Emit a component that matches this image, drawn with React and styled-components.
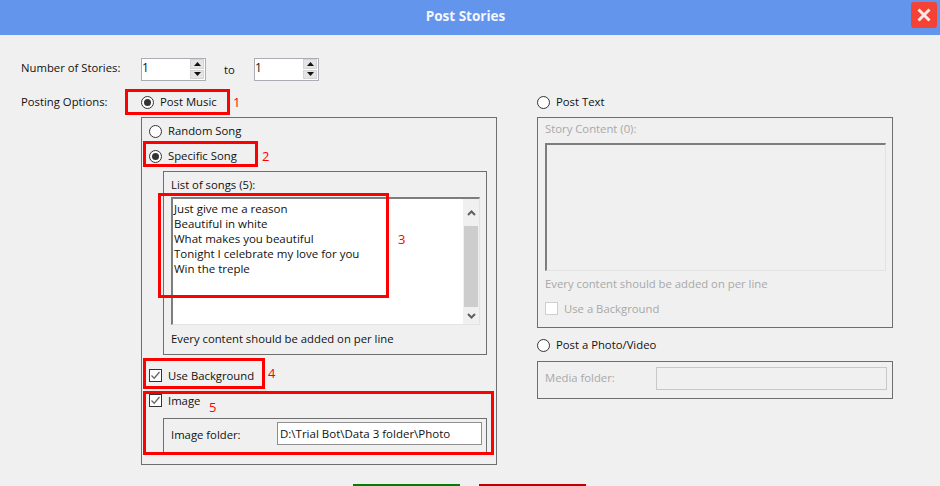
import React from "react";
import styled, { createGlobalStyle } from "styled-components";

const Global = createGlobalStyle`
  html, body { margin: 0; padding: 0; background: #f0f0f0; }
  * { box-sizing: border-box; }
`;

const Page = styled.div`
  position: relative;
  width: 940px;
  height: 486px;
  overflow: hidden;
  background: #f0f0f0;
  color: #111;
  font-family: "Open Sans", "Noto Sans", sans-serif;
  font-size: 11.3px;
  line-height: 15px;
`;
const TitleBar = styled.header`
  height: 35px;
  background: #6495ed;
  display: flex;
  align-items: center;
  padding-right: 3px;
`;
const Title = styled.h1`
  flex: 1;
  margin: 0 0 3px;
  padding-left: 20px;
  text-align: center;
  font-size: 13.5px;
  font-weight: 700;
  color: #f4f7fd;
`;
const Close = styled.button`
  width: 26px;
  height: 26px;
  margin-top: -6px;
  padding: 0;
  border: 0;
  border-radius: 3px;
  background: #f44336;
  display: flex;
  align-items: center;
  justify-content: center;
`;
const Form = styled.main`
  padding: 23px 0 0 21px;
`;
const NumberRow = styled.div`
  display: flex;
  align-items: flex-start;
  height: 23px;
`;
const FieldLabel = styled.div`
  width: 120px;
  flex: none;
  line-height: ${(p) => p.$lh}px;
`;
const To = styled.span`
  width: 48px;
  padding-left: 18px;
  padding-top: 4px;
`;
const Spinner = styled.div`
  width: 65px;
  height: 23px;
  background: #fff;
  border: 1px solid #acacb4;
  display: flex;
  padding-right: 1px;
  justify-content: space-between;
`;
const SpinValue = styled.span`
  font-size: 12px;
  line-height: 17px;
`;
const SpinButtons = styled.div`
  width: 14px;
  height: 20px;
  display: flex;
  flex-direction: column;
  gap: 1px;
`;
const SpinButton = styled.div`
  flex: 1;
  background: #e4e4e4;
  border: 1px solid #d4d4d4;
  display: flex;
  align-items: center;
  justify-content: center;
`;
const Columns = styled.div`
  display: flex;
  margin-top: 9px;
`;
const Side = styled.section`
  width: 356px;
  flex: none;
  margin-left: ${(p) => p.$gap}px;
`;
const OptionRow = styled.label`
  display: flex;
  align-items: center;
  gap: 6px;
  height: ${(p) => p.$h || 24}px;
  margin-top: ${(p) => p.$mt || 0}px;
  color: ${(p) => (p.$off ? "#a8a8a8" : "inherit")};
`;
const OptionText = styled.span`
  margin-bottom: ${(p) => (p.$level ? 0 : 2)}px;
`;
const Radio = styled.span`
  width: 13px;
  height: 13px;
  flex: none;
  border-radius: 50%;
  border: 1px solid #333;
  background: #fff;
  display: flex;
  align-items: center;
  justify-content: center;
  &::after {
    content: "";
    display: ${(p) => (p.$on ? "block" : "none")};
    width: 7px;
    height: 7px;
    border-radius: 50%;
    background: #333;
  }
`;
const Check = styled.span`
  width: 13px;
  height: 13px;
  flex: none;
  border: 1px solid ${(p) => (p.$off ? "#cfcfcf" : "#333")};
  background: #fff;
  display: flex;
  align-items: center;
  justify-content: center;
`;
const Group = styled.div`
  border: 1px solid #6e6e6e;
  margin-top: ${(p) => p.$mt || 3}px;
  height: ${(p) => p.$h}px;
  padding: ${(p) => p.$pad};
`;
const Inner = styled.div`
  border: 1px solid #6e6e6e;
  width: 324px;
  margin-left: 14px;
`;
const SongBox = styled(Inner)`
  height: 184px;
  margin-top: 3px;
  padding: 5px 5px 0 7px;
`;
const FolderBox = styled(Inner)`
  height: 36px;
  margin-top: 10px;
  padding: 3px 4px 0 7px;
  display: flex;
  align-items: flex-start;
`;
const Caption = styled.div`
  height: ${(p) => p.$h || 15}px;
  color: ${(p) => (p.$off ? "#a8a8a8" : "inherit")};
  line-height: ${(p) => p.$h || 15}px;
`;
const ListArea = styled.div`
  height: 128px;
  width: 309px;
  margin: 5px 0 6px;
  border-top: 2px solid #7d7d7d;
  border-left: 2px solid #7d7d7d;
  border-right: 1px solid #e3e3e3;
  border-bottom: 1px solid #e3e3e3;
  background: ${(p) => (p.$off ? "#f0f0f0" : "#fff")};
  display: flex;
  justify-content: space-between;
`;
const Lines = styled.div`
  padding: 2px 0 0 1px;
  font-size: 11.5px;
`;
const Scroll = styled.div`
  width: 16px;
  background: #f0f0f0;
  padding: 0 1px;
  display: flex;
  flex-direction: column;
  align-items: center;
`;
const ScrollEnd = styled.div`
  height: 27px;
  display: flex;
  align-items: center;
  justify-content: center;
  &:last-child { height: 17px; }
`;
const Thumb = styled.div`
  width: 100%;
  flex: 1;
  background: #cdcdcd;
`;
const FolderLabel = styled.div`
  width: 106px;
  flex: none;
  padding-top: 5px;
`;
const TextField = styled.div`
  flex: 1;
  height: 23px;
  border: 1px solid ${(p) => (p.$off ? "#c8c8c8" : "#8f8f8f")};
  background: ${(p) => (p.$off ? "#f0f0f0" : "#fff")};
  padding: 3px 2px 2px;
  font-size: 11.5px;
`;
const StoryArea = styled(ListArea)`
  width: 341px;
  margin: 7px 0 5px;
`;
const StoryBody = styled.div`
  padding: 3px 0 0 7px;
`;
const MediaRow = styled.div`
  display: flex;
  padding: 5px 5px 0 7px;
`;
const MediaLabel = styled(FolderLabel)`
  width: 111px;
  padding-top: 3px;
  color: #a8a8a8;
`;
const ActionRow = styled.div`
  display: flex;
  gap: 19px;
  margin: 19px 0 0 332px;
`;
const Action = styled.button`
  width: 107px;
  height: 30px;
  border: 0;
  padding: 0;
  background: ${(p) => p.$bg};
`;
const Mark = styled.div`
  position: absolute;
  left: ${(p) => p.$x}px;
  top: ${(p) => p.$y}px;
  width: ${(p) => p.$w}px;
  height: ${(p) => p.$h}px;
  border: 3px solid #f00;
  pointer-events: none;
`;
const Num = styled.span`
  position: absolute;
  left: ${(p) => p.$x}px;
  top: ${(p) => p.$y}px;
  color: #f00;
  font-size: 13px;
  line-height: 16px;
`;

const Tick = () => (
  <svg width="11" height="11" viewBox="0 0 11 11" fill="none">
    <path d="M1.5 5.5L4.2 8.2L9.5 2" stroke="#666" strokeWidth="1.3" />
  </svg>
);
const Tri = ({ up }) => (
  <svg width="7" height="4" viewBox="0 0 7 4">
    <path d={up ? "M3.5 0L7 4H0Z" : "M0 0H7L3.5 4Z"} fill="#111" />
  </svg>
);
const Chev = ({ up }) => (
  <svg width="9" height="6" viewBox="0 0 9 6" fill="none">
    <path d={up ? "M1 5L4.5 1.5L8 5" : "M1 1L4.5 4.5L8 1"} stroke="#606060" strokeWidth="2" />
  </svg>
);
const Spin = ({ value }) => (
  <Spinner>
    <SpinValue>{value}</SpinValue>
    <SpinButtons>
      <SpinButton><Tri up /></SpinButton>
      <SpinButton><Tri /></SpinButton>
    </SpinButtons>
  </Spinner>
);

const marks = [
  [125, 89, 105, 26],
  [143, 141, 115, 26],
  [158, 193, 231, 105],
  [143, 358, 122, 31],
  [143, 391, 351, 64],
];
const nums = [
  ["1", 233, 94],
  ["2", 262, 148],
  ["3", 398, 231],
  ["4", 268, 365],
  ["5", 209, 399],
];

export default function App() {
  return (
    <Page>
      <Global />
      <TitleBar>
        <Title>Post Stories</Title>
        <Close aria-label="Close">
          <svg width="16" height="16" viewBox="0 0 16 16" fill="none">
            <path d="M2.5 2.5L13.5 13.5M13.5 2.5L2.5 13.5" stroke="#fbe9e7" strokeWidth="3" />
          </svg>
        </Close>
      </TitleBar>
      <Form>
        <NumberRow>
          <FieldLabel $lh={20}>Number of Stories:</FieldLabel>
          <Spin value="1" />
          <To>to</To>
          <Spin value="1" />
        </NumberRow>
        <Columns>
          <FieldLabel $lh={24}>Posting Options:</FieldLabel>
          <Side $gap={0}>
            <OptionRow><Radio $on /><OptionText>Post Music</OptionText></OptionRow>
            <Group $h={348} $pad="1px 0 0 7px">
              <OptionRow><Radio /><OptionText>Random Song</OptionText></OptionRow>
              <OptionRow $mt={1}><Radio $on /><OptionText>Specific Song</OptionText></OptionRow>
              <SongBox>
                <Caption>List of songs (5):</Caption>
                <ListArea>
                  <Lines>
                    <div>Just give me a reason</div>
                    <div>Beautiful in white</div>
                    <div>What makes you beautiful</div>
                    <div>Tonight I celebrate my love for you</div>
                    <div>Win the treple</div>
                  </Lines>
                  <Scroll>
                    <ScrollEnd><Chev up /></ScrollEnd>
                    <Thumb />
                    <ScrollEnd><Chev /></ScrollEnd>
                  </Scroll>
                </ListArea>
                <Caption>Every content should be added on per line</Caption>
              </SongBox>
              <OptionRow $mt={8}><Check><Tick /></Check><OptionText $level>Use Background</OptionText></OptionRow>
              <OptionRow $h={15} $mt={6}><Check><Tick /></Check><OptionText $level>Image</OptionText></OptionRow>
              <FolderBox>
                <FolderLabel>Image folder:</FolderLabel>
                <TextField>D:\Trial Bot\Data 3 folder\Photo</TextField>
              </FolderBox>
            </Group>
          </Side>
          <Side $gap={40}>
            <OptionRow><Radio /><OptionText>Post Text</OptionText></OptionRow>
            <Group $h={211} $pad="0">
              <StoryBody>
                <Caption $off>Story Content (0):</Caption>
                <StoryArea $off />
                <Caption $off>Every content should be added on per line</Caption>
                <OptionRow $off $mt={5}><Check $off /><OptionText $level>Use a Background</OptionText></OptionRow>
              </StoryBody>
            </Group>
            <OptionRow $mt={5}><Radio /><OptionText>Post a Photo/Video</OptionText></OptionRow>
            <Group $h={38} $pad="0" $mt={4}>
              <MediaRow>
                <MediaLabel>Media folder:</MediaLabel>
                <TextField $off />
              </MediaRow>
            </Group>
          </Side>
        </Columns>
        <ActionRow>
          <Action $bg="#008000" aria-label="Save" />
          <Action $bg="#c00000" aria-label="Cancel" />
        </ActionRow>
      </Form>
      {marks.map(([x, y, w, h]) => (
        <Mark key={x + "-" + y} $x={x} $y={y} $w={w} $h={h} />
      ))}
      {nums.map(([n, x, y]) => (
        <Num key={n} $x={x} $y={y}>{n}</Num>
      ))}
    </Page>
  );
}
